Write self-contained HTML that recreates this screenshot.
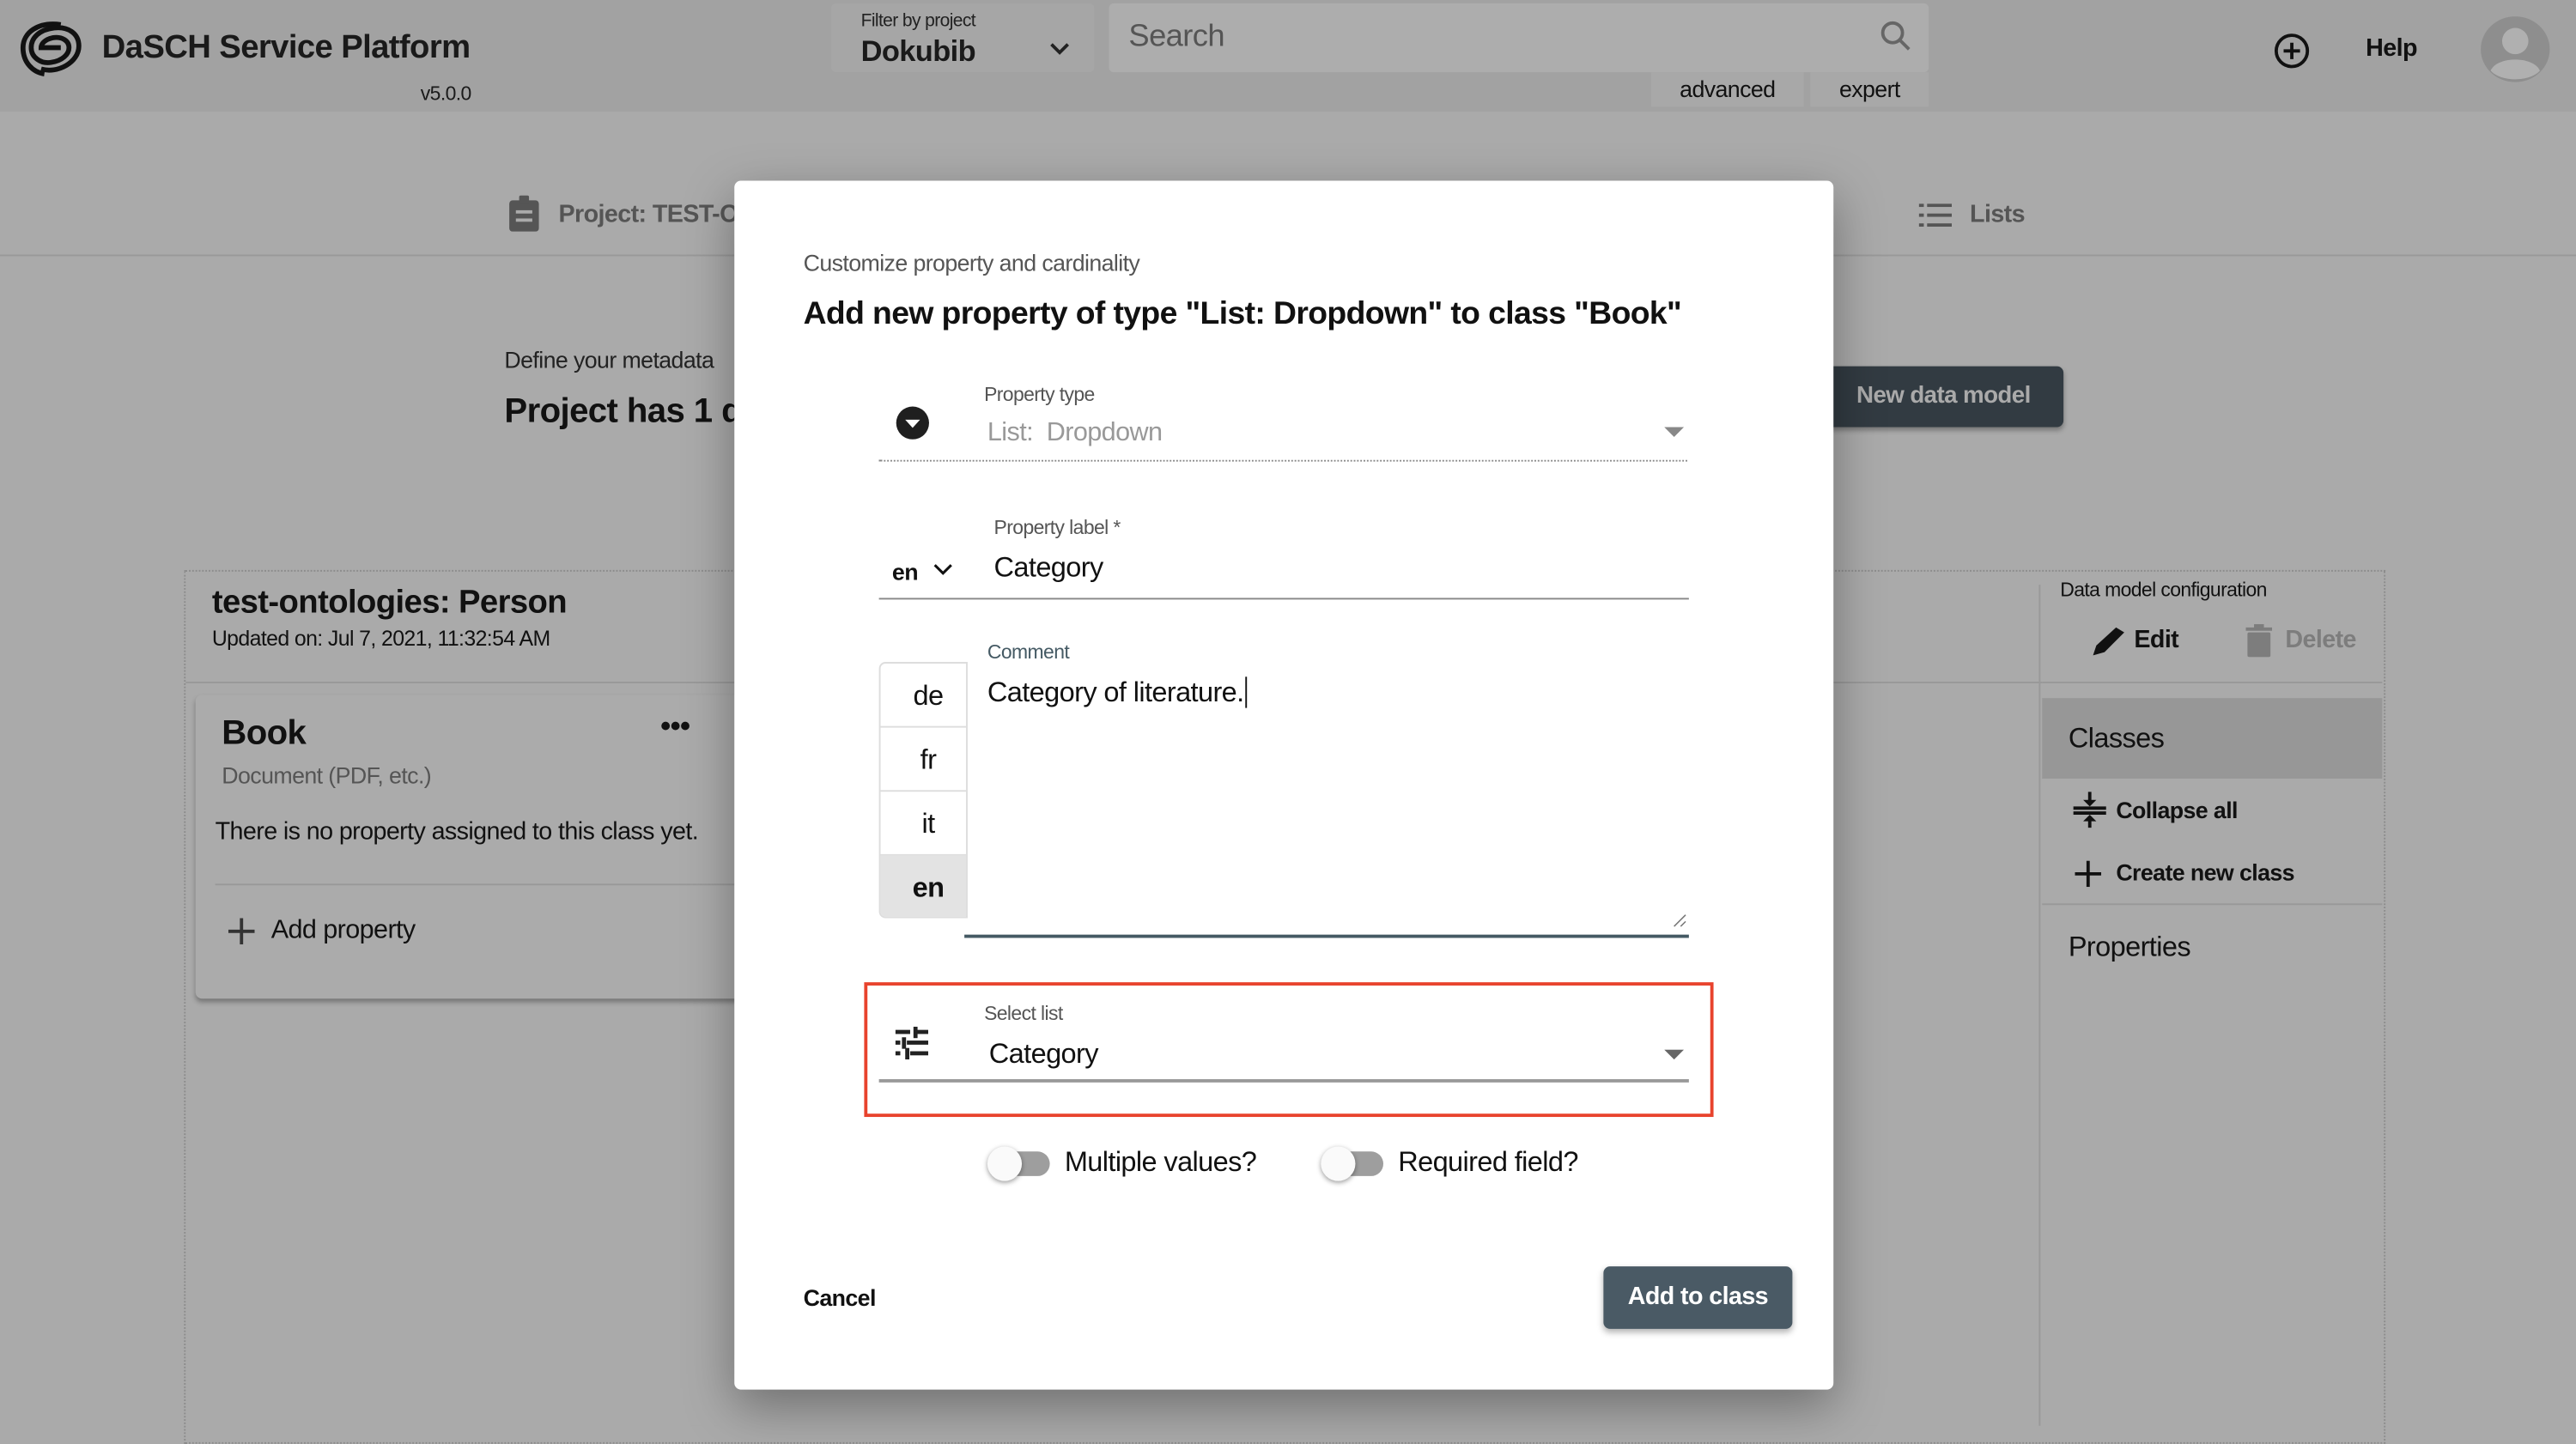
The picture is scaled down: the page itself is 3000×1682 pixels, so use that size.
<!DOCTYPE html>
<html><head><meta charset="utf-8"><style>
html,body{margin:0;padding:0;width:3000px;height:1660px;overflow:hidden;background:#aaa;font-family:"Liberation Sans",sans-serif;}
#s{position:absolute;left:0;top:0;width:1568px;height:868px;transform:scale(1.9133);transform-origin:0 0;background:#aaa;letter-spacing:-0.02em;}
.a{position:absolute;white-space:nowrap;}
</style></head><body><div id="s">
<div class="a" style="left:0;top:0;width:1568px;height:68px;background:#a2a2a2"></div>
<svg class="a" style="left:11px;top:12px" width="40" height="36" viewBox="0 0 40 36"><g fill="none" stroke="#111" stroke-width="3"><path d="M26 3 C12 1 3 8 3 17 C3 26 9 32 16 33"/><path d="M14 30 C24 33 37 26 37 16 C37 8 30 4 22 5 C13 6 8 11 8 17 C8 23 14 27 20 26 C27 25 31 21 31 17 C31 13 27 10 21 11 C16 12 14 15 14 17 L26 17"/></g></svg>
<div class="a" style="left:62px;top:18px;font-size:20px;font-weight:bold;color:#1a1a1a">DaSCH Service Platform</div>
<div class="a" style="left:256px;top:50px;font-size:12px;color:#1a1a1a">v5.0.0</div>
<div class="a" style="left:506px;top:2px;width:160px;height:42px;background:#a6a6a6;border-radius:3px"></div>
<div class="a" style="left:524px;top:7px;font-size:11px;color:#222">Filter by project</div>
<div class="a" style="left:524px;top:21px;font-size:18px;font-weight:bold;color:#1a1a1a">Dokubib</div>
<svg class="a" style="left:638px;top:25px" width="14" height="10"><path d="M2 2 L7 7 L12 2" stroke="#222" stroke-width="2" fill="none"/></svg>
<div class="a" style="left:675px;top:2px;width:499px;height:42px;background:#adadad;border-radius:3px"></div>
<div class="a" style="left:687px;top:12px;font-size:19px;color:#555">Search</div>
<svg class="a" style="left:1144px;top:12px" width="20" height="20"><circle cx="8" cy="8" r="6" stroke="#666" stroke-width="2" fill="none"/><path d="M12.5 12.5 L18 18" stroke="#666" stroke-width="2"/></svg>
<div class="a" style="left:1005px;top:44px;width:93px;height:21px;background:#a8a8a8;text-align:center;font-size:14px;line-height:21px;color:#111">advanced</div>
<div class="a" style="left:1102px;top:44px;width:72px;height:21px;background:#a8a8a8;text-align:center;font-size:14px;line-height:21px;color:#111">expert</div>
<svg class="a" style="left:1384px;top:20px" width="22" height="22"><circle cx="11" cy="11" r="9.5" stroke="#111" stroke-width="2" fill="none"/><path d="M11 6V16M6 11H16" stroke="#111" stroke-width="2"/></svg>
<div class="a" style="left:1440px;top:21px;font-size:15px;font-weight:bold;color:#111">Help</div>
<svg class="a" style="left:1510px;top:10px" width="42" height="40"><ellipse cx="21" cy="20" rx="21" ry="20" fill="#8e8e8e"/><circle cx="21" cy="15" r="8" fill="#b0b0b0"/><path d="M6 33 C10 24 32 24 36 33 C30 40 12 40 6 33Z" fill="#b0b0b0"/></svg>
<svg class="a" style="left:309px;top:119px" width="20" height="22"><rect x="1" y="3" width="18" height="19" rx="2" fill="#555"/><rect x="7" y="0" width="6" height="5" rx="1" fill="#555"/><rect x="5" y="9" width="10" height="2" fill="#aaa"/><rect x="5" y="14" width="10" height="2" fill="#aaa"/></svg>
<div class="a" style="left:340px;top:122px;font-size:15px;font-weight:bold;color:#555">Project: TEST-ON</div>
<svg class="a" style="left:1168px;top:124px" width="20" height="14"><g fill="#555"><rect x="0" y="0" width="3" height="2"/><rect x="5" y="0" width="15" height="2"/><rect x="0" y="6" width="3" height="2"/><rect x="5" y="6" width="15" height="2"/><rect x="0" y="12" width="3" height="2"/><rect x="5" y="12" width="15" height="2"/></g></svg>
<div class="a" style="left:1199px;top:122px;font-size:15px;font-weight:bold;color:#555">Lists</div>
<div class="a" style="left:0;top:155px;width:1568px;height:1px;background:#999"></div>
<div class="a" style="left:307px;top:211px;font-size:14px;color:#222">Define your metadata</div>
<div class="a" style="left:307px;top:239px;font-size:21px;font-weight:bold;color:#111">Project has 1 d</div>
<div class="a" style="left:1100px;top:223px;width:156px;height:37px;background:#323b42;border-radius:4px;box-shadow:0 2px 3px rgba(0,0,0,.3)"></div>
<div class="a" style="left:1130px;top:233px;font-size:14.5px;font-weight:bold;color:#aaa">New data model</div>
<div class="a" style="left:112px;top:347px;width:1338px;height:530px;border:1px dotted #8c8c8c"></div>
<div class="a" style="left:113px;top:415px;width:1130px;height:1px;background:#999"></div>
<div class="a" style="left:129px;top:356px;font-size:20px;font-weight:bold;color:#111">test-ontologies: Person</div>
<div class="a" style="left:129px;top:381px;font-size:13px;color:#111">Updated on: Jul 7, 2021, 11:32:54 AM</div>
<div class="a" style="left:119px;top:423px;width:340px;height:185px;background:#ababab;border-radius:4px;box-shadow:0 2px 3px rgba(0,0,0,.3)"></div>
<div class="a" style="left:135px;top:435px;font-size:21px;font-weight:bold;color:#111">Book</div>
<div class="a" style="left:402px;top:432px;font-size:18px;font-weight:bold;color:#111">•••</div>
<div class="a" style="left:135px;top:464px;font-size:14px;color:#555">Document (PDF, etc.)</div>
<div class="a" style="left:131px;top:498px;font-size:15px;color:#111">There is no property assigned to this class yet.</div>
<div class="a" style="left:131px;top:538px;width:330px;height:1px;background:#999"></div>
<svg class="a" style="left:139px;top:559px" width="16" height="16"><path d="M8 0V16M0 8H16" stroke="#333" stroke-width="2"/></svg>
<div class="a" style="left:165px;top:558px;font-size:16px;color:#111">Add property</div>
<div class="a" style="left:1241px;top:356px;width:1px;height:512px;background:#999"></div>
<div class="a" style="left:1243px;top:415px;width:207px;height:1px;background:#999"></div>
<div class="a" style="left:1254px;top:352px;font-size:12px;color:#111">Data model configuration</div>
<svg class="a" style="left:1273px;top:380px" width="22" height="20"><path d="M1 19 L3 13 L15 2 L20 5 L8 17Z" fill="#111"/></svg>
<div class="a" style="left:1299px;top:381px;font-size:15px;font-weight:bold;color:#111">Edit</div>
<svg class="a" style="left:1367px;top:380px" width="16" height="20"><rect x="1" y="5" width="14" height="15" rx="1" fill="#7d7d7d"/><rect x="0" y="2" width="16" height="2" fill="#7d7d7d"/><rect x="5" y="0" width="6" height="3" fill="#7d7d7d"/></svg>
<div class="a" style="left:1391px;top:381px;font-size:15px;font-weight:bold;color:#7d7d7d">Delete</div>
<div class="a" style="left:1243px;top:425px;width:207px;height:49px;background:#979797"></div>
<div class="a" style="left:1259px;top:440px;font-size:17px;color:#111">Classes</div>
<svg class="a" style="left:1262px;top:482px" width="20" height="22"><g stroke="#111" stroke-width="2" fill="#111"><path d="M0 10H20M0 13H20"/><path d="M10 0V7M10 16V22" /></g><path d="M6 5L10 9L14 5Z M6 18L10 14L14 18Z" fill="#111"/></svg>
<div class="a" style="left:1288px;top:485px;font-size:14px;font-weight:bold;color:#111">Collapse all</div>
<svg class="a" style="left:1263px;top:524px" width="16" height="16"><path d="M8 0V16M0 8H16" stroke="#111" stroke-width="2"/></svg>
<div class="a" style="left:1288px;top:523px;font-size:14px;font-weight:bold;color:#111">Create new class</div>
<div class="a" style="left:1243px;top:550px;width:207px;height:1px;background:#999"></div>
<div class="a" style="left:1259px;top:567px;font-size:17px;color:#111">Properties</div>
<div class="a" style="left:447px;top:110px;width:669px;height:736px;background:#fff;border-radius:4px;box-shadow:0 10px 30px rgba(0,0,0,.35)"></div>
<div class="a" style="left:489px;top:152px;font-size:14px;color:#555">Customize property and cardinality</div>
<div class="a" style="left:489px;top:180px;font-size:19.5px;font-weight:bold;color:#111">Add new property of type "List: Dropdown" to class "Book"</div>
<svg class="a" style="left:545px;top:247px" width="21" height="21"><circle cx="10.5" cy="10.5" r="10" fill="#1f1f1f"/><path d="M6 8.5H15L10.5 13.5Z" fill="#fff"/></svg>
<div class="a" style="left:599px;top:233px;font-size:12px;color:#555">Property type</div>
<div class="a" style="left:601px;top:255px;font-size:16px;color:#999">List:&nbsp; Dropdown</div>
<svg class="a" style="left:1013px;top:260px" width="12" height="7"><path d="M0 0H12L6 6Z" fill="#888"/></svg>
<div class="a" style="left:535px;top:280px;width:492px;border-top:1px dotted #888"></div>
<div class="a" style="left:543px;top:340px;font-size:14px;font-weight:bold;color:#111">en</div>
<svg class="a" style="left:568px;top:342px" width="12" height="9"><path d="M1 2L6 7L11 2" stroke="#111" stroke-width="1.6" fill="none"/></svg>
<div class="a" style="left:605px;top:314px;font-size:12px;color:#555">Property label *</div>
<div class="a" style="left:605px;top:336px;font-size:17px;color:#111">Category</div>
<div class="a" style="left:535px;top:364px;width:493px;height:1px;background:#888"></div>
<div class="a" style="left:601px;top:390px;font-size:12px;color:#455a64">Comment</div>
<div class="a" style="left:535px;top:403px;width:52px;height:154px;border:1px solid #ddd;border-radius:4px 0 0 4px;overflow:hidden;background:#fff">
 <div style="height:38px;border-bottom:1px solid #ddd;text-align:center;line-height:40px;font-size:17px;color:#111;padding-left:6px">de</div>
 <div style="height:38px;border-bottom:1px solid #ddd;text-align:center;line-height:40px;font-size:17px;color:#111;padding-left:6px">fr</div>
 <div style="height:38px;border-bottom:1px solid #ddd;text-align:center;line-height:40px;font-size:17px;color:#111;padding-left:6px">it</div>
 <div style="height:38px;background:#e3e3e3;text-align:center;line-height:40px;font-size:17px;font-weight:bold;color:#111;padding-left:6px">en</div>
</div>
<div class="a" style="left:601px;top:412px;font-size:17px;color:#111">Category of literature.<span style="border-left:1px solid #111;margin-left:1px"></span></div>
<svg class="a" style="left:1018px;top:556px" width="9" height="9"><path d="M1 8L8 1M5 8L8 5" stroke="#777" stroke-width="0.8"/></svg>
<div class="a" style="left:587px;top:569px;width:441px;height:2px;background:#455a64"></div>
<div class="a" style="left:526px;top:598px;width:513px;height:78px;border:2px solid #e8432d"></div>
<svg class="a" style="left:545px;top:625px" width="20" height="20"><g fill="#222"><rect x="0" y="2" width="9" height="2.5"/><rect x="12" y="2" width="8" height="2.5"/><rect x="11" y="0" width="2.5" height="7"/><rect x="0" y="8.5" width="3" height="2.5"/><rect x="7" y="8.5" width="13" height="2.5"/><rect x="4" y="6.5" width="2.5" height="7"/><rect x="0" y="15" width="3" height="2.5"/><rect x="9" y="15" width="11" height="2.5"/><rect x="6" y="13" width="2.5" height="7"/></g></svg>
<div class="a" style="left:599px;top:610px;font-size:12px;color:#555">Select list</div>
<div class="a" style="left:602px;top:632px;font-size:17px;color:#111">Category</div>
<svg class="a" style="left:1013px;top:639px" width="12" height="7"><path d="M0 0H12L6 6Z" fill="#666"/></svg>
<div class="a" style="left:535px;top:657px;width:493px;height:2px;background:#999"></div>
<div class="a" style="left:605px;top:701px;width:34px;height:15px;background:#9e9e9e;border-radius:8px"></div>
<div class="a" style="left:601px;top:698px;width:21px;height:21px;background:#fafafa;border-radius:50%;box-shadow:0 1px 3px rgba(0,0,0,.4)"></div>
<div class="a" style="left:648px;top:698px;font-size:17px;color:#111">Multiple values?</div>
<div class="a" style="left:808px;top:701px;width:34px;height:15px;background:#9e9e9e;border-radius:8px"></div>
<div class="a" style="left:804px;top:698px;width:21px;height:21px;background:#fafafa;border-radius:50%;box-shadow:0 1px 3px rgba(0,0,0,.4)"></div>
<div class="a" style="left:851px;top:698px;font-size:17px;color:#111">Required field?</div>
<div class="a" style="left:489px;top:782px;font-size:14px;font-weight:bold;color:#111">Cancel</div>
<div class="a" style="left:976px;top:771px;width:115px;height:38px;background:#4a5a65;border-radius:4px;box-shadow:0 2px 4px rgba(0,0,0,.3)"></div>
<div class="a" style="left:976px;top:781px;width:115px;text-align:center;font-size:15px;font-weight:bold;color:#fff">Add to class</div>
</div></body></html>
